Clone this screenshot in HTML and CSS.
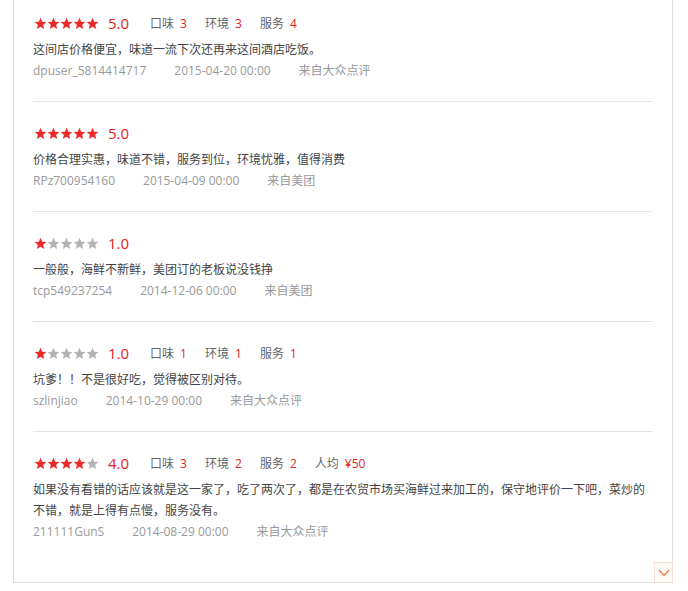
FILE: index.html
```html
<!DOCTYPE html>
<html lang="zh-CN">
  <head>
    <meta charset="UTF-8" />
    <meta name="viewport" content="width=device-width, initial-scale=1.0" />
    <title>评价</title>
    <link rel="stylesheet" href="styles.css">
  </head>
  <body>
    <svg width="0" height="0" style="position:absolute">
      <defs>
        <symbol id="star" viewBox="0 0 24 24">
          <polygon points="12,1.5 15.1,8.6 22.8,9.3 17,14.4 18.7,22 12,18 5.3,22 7,14.4 1.2,9.3 8.9,8.6" />
        </symbol>
      </defs>
    </svg>
    <div class="review-box">
      <ul class="review-list">
        <li class="review">
          <div class="score-row">
            <span class="stars">
              <svg class="on"><use href="#star"/></svg><svg class="on"><use href="#star"/></svg><svg class="on"><use href="#star"/></svg><svg class="on"><use href="#star"/></svg><svg class="on"><use href="#star"/></svg>
            </span>
            <span class="score">5.0</span>
            <span class="sub">口味<em>3</em></span>
            <span class="sub">环境<em>3</em></span>
            <span class="sub">服务<em>4</em></span>
          </div>
          <p class="content">这间店价格便宜，味道一流下次还再来这间酒店吃饭。</p>
          <div class="meta"><span>dpuser_5814414717</span><span>2015-04-20 00:00</span><span>来自大众点评</span></div>
        </li>
        <li class="review">
          <div class="score-row">
            <span class="stars">
              <svg class="on"><use href="#star"/></svg><svg class="on"><use href="#star"/></svg><svg class="on"><use href="#star"/></svg><svg class="on"><use href="#star"/></svg><svg class="on"><use href="#star"/></svg>
            </span>
            <span class="score">5.0</span>
          </div>
          <p class="content">价格合理实惠，味道不错，服务到位，环境忧雅，值得消费</p>
          <div class="meta"><span>RPz700954160</span><span>2015-04-09 00:00</span><span>来自美团</span></div>
        </li>
        <li class="review">
          <div class="score-row">
            <span class="stars">
              <svg class="on"><use href="#star"/></svg><svg><use href="#star"/></svg><svg><use href="#star"/></svg><svg><use href="#star"/></svg><svg><use href="#star"/></svg>
            </span>
            <span class="score">1.0</span>
          </div>
          <p class="content">一般般，海鲜不新鲜，美团订的老板说没钱挣</p>
          <div class="meta"><span>tcp549237254</span><span>2014-12-06 00:00</span><span>来自美团</span></div>
        </li>
        <li class="review">
          <div class="score-row">
            <span class="stars">
              <svg class="on"><use href="#star"/></svg><svg><use href="#star"/></svg><svg><use href="#star"/></svg><svg><use href="#star"/></svg><svg><use href="#star"/></svg>
            </span>
            <span class="score">1.0</span>
            <span class="sub">口味<em>1</em></span>
            <span class="sub">环境<em>1</em></span>
            <span class="sub">服务<em>1</em></span>
          </div>
          <p class="content">坑爹！！不是很好吃，觉得被区别对待。</p>
          <div class="meta"><span>szlinjiao</span><span>2014-10-29 00:00</span><span>来自大众点评</span></div>
        </li>
        <li class="review">
          <div class="score-row">
            <span class="stars">
              <svg class="on"><use href="#star"/></svg><svg class="on"><use href="#star"/></svg><svg class="on"><use href="#star"/></svg><svg class="on"><use href="#star"/></svg><svg><use href="#star"/></svg>
            </span>
            <span class="score">4.0</span>
            <span class="sub">口味<em>3</em></span>
            <span class="sub">环境<em>2</em></span>
            <span class="sub">服务<em>2</em></span>
            <span class="sub">人均<em>¥50</em></span>
          </div>
          <p class="content">如果没有看错的话应该就是这一家了，吃了两次了，都是在农贸市场买海鲜过来加工的，保守地评价一下吧，菜炒的不错，就是上得有点慢，服务没有。</p>
          <div class="meta"><span>211111GunS</span><span>2014-08-29 00:00</span><span>来自大众点评</span></div>
        </li>
      </ul>
      <a class="more" href="#">
        <svg width="12" height="8" viewBox="0 0 12 8"><polyline points="1,1 6,6.5 11,1" fill="none" stroke="#f07b3f" stroke-width="1.2"/></svg>
      </a>
    </div>
  </body>
</html>
```

FILE: styles.css
```css
body {
  margin: 0;
  background: #fff;
  font-family: "Open Sans", "Noto Sans CJK SC", sans-serif;
  font-size: 12px;
  color: #333;
}

.review-box {
  position: relative;
  box-sizing: border-box;
  width: 660px;
  margin-left: 13px;
  padding: 0 19px 20px;
  border: 1px solid #ddd;
  border-top: none;
}

.review-list {
  list-style: none;
  margin: 0;
  padding: 0;
}

.review {
  padding: 15px 0 19px;
  border-bottom: 1px solid #e5e5e5;
}

.review:first-child {
  padding-top: 7px;
}

.review:last-child {
  border-bottom: none;
}

.score-row {
  display: flex;
  align-items: center;
  height: 32px;
}

.stars {
  display: flex;
  margin-left: 1px;
}

.stars svg {
  width: 13px;
  height: 13px;
  fill: #b3b3b3;
}

.stars svg.on {
  fill: #ee2b2b;
}

.score {
  margin-left: 9px;
  margin-right: 21px;
  font-size: 15px;
  color: #e42222;
}

.sub {
  margin-right: 18px;
  color: #666;
}

.sub em {
  font-style: normal;
  margin-left: 6px;
  color: #e42222;
}

.content {
  margin: 0;
  line-height: 21px;
  color: #444;
}

.meta {
  display: flex;
  gap: 28px;
  line-height: 22px;
  color: #999;
}

.more {
  position: absolute;
  right: -1px;
  bottom: -1px;
  box-sizing: border-box;
  width: 19px;
  height: 21px;
  display: flex;
  align-items: center;
  justify-content: center;
  border: 1px solid #f5e1d5;
  background: #fffaf6;
}
```
